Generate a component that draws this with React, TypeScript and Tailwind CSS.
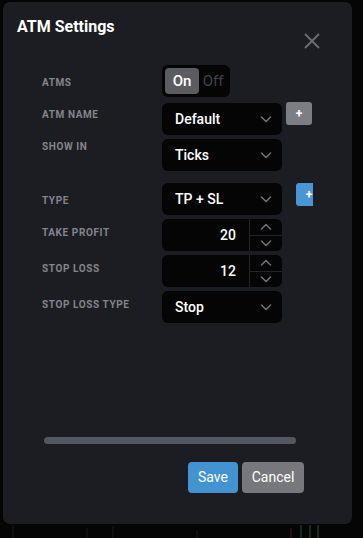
import React from "react";

const Chevron = ({ up = false }: { up?: boolean }) => (
  <svg width="12" height="7" viewBox="0 0 12 7" fill="none">
    <path
      d={up ? "M1.5 6 L6 1.5 L10.5 6" : "M1.5 1 L6 5.5 L10.5 1"}
      stroke="#6e7076"
      strokeWidth="1.6"
      strokeLinecap="round"
      strokeLinejoin="round"
    />
  </svg>
);

const Label = ({ text, pt }: { text: string; pt: string }) => (
  <div
    className={`w-[120px] shrink-0 text-[10px] leading-[12px] font-bold tracking-[0.6px] text-[#83858b] ${pt}`}
  >
    {text}
  </div>
);

const Select = ({ value }: { value: string }) => (
  <div className="w-[120px] h-[32px] rounded-[6px] bg-[#050506] flex items-center justify-between pl-[13px] pr-[10px]">
    <span className="text-[14px] font-medium text-white">{value}</span>
    <Chevron />
  </div>
);

const NumberInput = ({ value }: { value: string }) => (
  <div className="w-[120px] h-[32px] rounded-[6px] bg-[#050506] flex overflow-hidden">
    <div className="flex-1 flex items-center justify-end pr-[13px] text-[14px] font-medium text-white">
      {value}
    </div>
    <div className="w-[33px] border-l border-[#24252b] flex flex-col">
      <div className="flex-1 flex items-center justify-center border-b border-[#24252b]">
        <Chevron up />
      </div>
      <div className="flex-1 flex items-center justify-center">
        <Chevron />
      </div>
    </div>
  </div>
);

export default function App() {
  return (
    <div
      className="relative w-[363px] h-[538px] bg-[#050506] overflow-hidden"
      style={{ fontFamily: "Roboto, 'Liberation Sans', sans-serif" }}
    >
      <svg className="absolute left-0 top-[524px]" width="363" height="14">
        <line x1="13" y1="2" x2="13" y2="14" stroke="#1a1a1c" />
        <line x1="87" y1="4" x2="87" y2="14" stroke="#1a1a1c" />
        <line x1="113" y1="2" x2="113" y2="14" stroke="#1d1d20" />
        <line x1="197" y1="6" x2="197" y2="14" stroke="#1a1a1c" />
        <line x1="291" y1="4" x2="291" y2="14" stroke="#4a1416" />
        <line x1="301" y1="1" x2="301" y2="14" stroke="#1f5a2a" />
        <line x1="310" y1="1" x2="310" y2="14" stroke="#1f5a2a" />
        <line x1="318" y1="1" x2="318" y2="14" stroke="#1f5a2a" />
      </svg>

      <div className="relative ml-[3px] mt-[2px] w-[349px] h-[522px] rounded-[7px] bg-[#1c1d22] flex flex-col">
        {/* header */}
        <div className="h-[63px] flex items-start justify-between">
          <div className="ml-[14px] mt-[13px] text-[16px] leading-[24px] font-bold text-white">
            ATM Settings
          </div>
          <svg className="mt-[31px] mr-[32px]" width="16" height="16" viewBox="0 0 16 16">
            <path d="M1 1 L15 15 M15 1 L1 15" stroke="#6c6e75" strokeWidth="1.8" />
          </svg>
        </div>

        {/* ATMS */}
        <div className="flex pl-[39px] h-[32px]">
          <Label text="ATMS" pt="pt-[12px]" />
          <div className="w-[68px] h-[32px] rounded-[6px] bg-[#050506] flex items-center p-[3px]">
            <div className="w-[34px] h-[26px] rounded-[4px] bg-[#5a5c62] flex items-center justify-center text-[15px] font-medium text-white">
              On
            </div>
            <div className="flex-1 flex items-center justify-center text-[15px] text-[#404248]">
              Off
            </div>
          </div>
        </div>

        {/* ATM NAME */}
        <div className="flex pl-[39px] mt-[6px]">
          <Label text="ATM NAME" pt="pt-[6px]" />
          <Select value="Default" />
          <div className="ml-[4px] -mt-[1px] w-[26px] h-[23px] rounded-[3px] bg-[#7c7e84] flex items-center justify-center text-white text-[12px] font-bold leading-none">
            +
          </div>
        </div>

        {/* SHOW IN */}
        <div className="flex pl-[39px] mt-[4px]">
          <Label text="SHOW IN" pt="pt-[2px]" />
          <Select value="Ticks" />
        </div>

        {/* TYPE */}
        <div className="flex pl-[39px] mt-[12px]">
          <Label text="TYPE" pt="pt-[12px]" />
          <Select value="TP + SL" />
          <div className="ml-[14px] w-[17px] h-[23px] overflow-hidden">
            <div className="w-[26px] h-[23px] rounded-[3px] bg-[#4a96d2] flex items-center justify-center text-white text-[12px] font-bold leading-none">
              +
            </div>
          </div>
        </div>

        {/* TAKE PROFIT */}
        <div className="flex pl-[39px] mt-[4px]">
          <Label text="TAKE PROFIT" pt="pt-[8px]" />
          <NumberInput value="20" />
        </div>

        {/* STOP LOSS */}
        <div className="flex pl-[39px] mt-[4px]">
          <Label text="STOP LOSS" pt="pt-[8px]" />
          <NumberInput value="12" />
        </div>

        {/* STOP LOSS TYPE */}
        <div className="flex pl-[39px] mt-[4px]">
          <Label text="STOP LOSS TYPE" pt="pt-[8px]" />
          <Select value="Stop" />
        </div>

        {/* scrollbar */}
        <div className="ml-[41px] mt-[114px] w-[252px] h-[7px] rounded-full bg-[#55575e]" />

        {/* buttons */}
        <div className="mt-[18px] flex justify-end gap-[4px] pr-[48px]">
          <button className="w-[50px] h-[31px] rounded-[4px] bg-[#4393d0] text-white text-[14px]">
            Save
          </button>
          <button className="w-[62px] h-[31px] rounded-[4px] bg-[#76787e] text-white text-[14px]">
            Cancel
          </button>
        </div>
      </div>
    </div>
  );
}
